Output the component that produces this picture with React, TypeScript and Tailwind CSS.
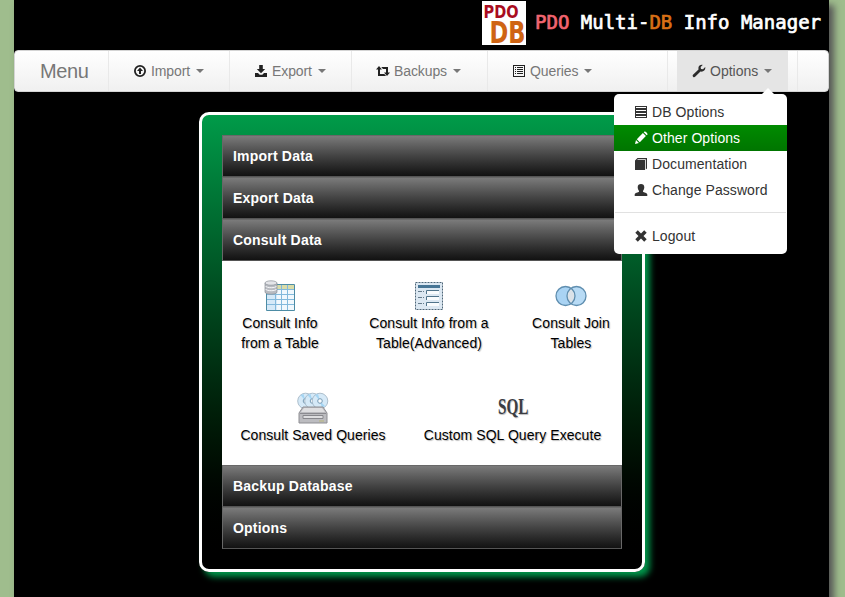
import React from "react";

type GlyphName = "upload" | "download" | "retweet" | "list" | "wrench" | "justify" | "pencil" | "book" | "user" | "remove";

function Glyph({ name, className = "" }: { name: GlyphName; className?: string }) {
  const shapes: Record<GlyphName, React.ReactNode> = {
    upload: (
      <>
        <circle cx="7" cy="7" r="5.1" fill="none" stroke="currentColor" strokeWidth="1.8" />
        <path d="M7 3.5L10 7H8v3H6V7H4z" />
      </>
    ),
    download: <path d="M5.2 1h3.6v4h2.4L7 9.2 2.8 5h2.4zM1 9h3l1.7 1.7h2.6L10 9h3v4H1z" />,
    retweet: <path d="M3 2l3 3.5H4V10h4.3l1.8 2H2V5.5H0zM5.2 3H12v5.5h2L11 12 8 8.5h2V5H7z" />,
    list: (
      <>
        <path fillRule="evenodd" d="M1 1h12v12H1zM2 2v10h10V2z" />
        <path d="M3 3h1v1H3zM5 3h6v1H5zM3 5h1v1H3zM5 5h6v1H5zM3 7h1v1H3zM5 7h6v1H5zM3 9h1v1H3zM5 9h6v1H5z" />
      </>
    ),
    wrench: <path d="M13.2 3.1L11 5.3 9 4.9 8.6 3l2.1-2.1C8.7.4 6.6 1.8 6.4 3.8L6.5 5.5 1 10.8c-1.2 1.3.8 3.3 2.1 2L8.5 7.5c2.8.8 5.4-1.7 4.7-4.4z" />,
    justify: <path fillRule="evenodd" d="M1 1h12v3H1zm1 1v1h10V2zM1 4h12v3H1zm1 1v1h10V5zM1 7h12v3H1zm1 1v1h10V8zM1 10h12v3H1zm1 1v1h10v-1z" />,
    pencil: <path d="M1 13l1-4 2.9 3zM2.8 8.2l6.1-6.1 3 3-6.1 6.1zM9.7 1.3l.8-.8c.8-.7 3.7 2.1 3 3l-.8.8z" />,
    book: <path d="M3.5 1H13v10.5l-1.2 1V2.2H4L3 3.1h8V13H1V3.5z" />,
    user: <path d="M3.7 4.2C3.7 2.1 5 1 7 1s3.3 1.1 3.3 3.2c0 1.6-.6 2.8-1.3 3.6v1c.7.8 4.3 1 4.3 2.8V13H.7v-1.4c0-1.8 3.6-2 4.3-2.8v-1c-.7-.8-1.3-2-1.3-3.6z" />,
    remove: <path d="M3.8 1.3L7 4.5l3.2-3.2 2.5 2.5L9.5 7l3.2 3.2-2.5 2.5L7 9.5l-3.2 3.2-2.5-2.5L4.5 7 1.3 3.8z" />,
  };
  return (
    <svg viewBox="0 0 14 14" className={`h-3.5 w-3.5 shrink-0 ${className}`} fill="currentColor">
      {shapes[name]}
    </svg>
  );
}

function Caret() {
  return <span className="ml-[6px] h-0 w-0 border-x-4 border-t-4 border-x-transparent border-t-[#777]" />;
}

function NavItem({ icon, label, className }: { icon: GlyphName; label: string; className: string }) {
  return (
    <div className={`flex h-full shrink-0 items-center border-r border-[#e9e9e9] text-[#777] ${className}`}>
      <Glyph name={icon} className="mr-1 text-[#222]" />
      <span className="tracking-[-0.1px]">{label}</span>
      <Caret />
    </div>
  );
}

function MenuRow({ icon, label, active = false }: { icon: GlyphName; label: string; active?: boolean }) {
  return (
    <div className={`flex h-[26px] items-center pl-5 ${active ? "bg-linear-to-b from-[#008b00] to-[#007500] text-white" : "text-[#333]"}`}>
      <Glyph name={icon} className="mr-1" />
      <span className="tracking-[0.08px]">{label}</span>
    </div>
  );
}

function Bar({ label }: { label: string }) {
  return (
    <div className="flex h-[42px] items-center border border-[#686868] border-b-[#555] bg-linear-to-b from-[#7b7b7b] to-[#121212] pl-[10px] text-[14px] font-bold tracking-[0.2px] text-white">
      {label}
    </div>
  );
}

function Logo() {
  return (
    <svg className="h-11 w-11 bg-white" viewBox="0 0 44 44" fontFamily="DejaVu Sans" fontWeight="bold">
      <text x="1.5" y="17" fontSize="18.5" textLength="35" lengthAdjust="spacingAndGlyphs" fill="#a90c20">PDO</text>
      <text x="7.5" y="41.5" fontSize="31" textLength="36" lengthAdjust="spacingAndGlyphs" fill="#cf6413">DB</text>
    </svg>
  );
}

function TableIcon() {
  return (
    <svg className="h-8 w-8" viewBox="0 0 32 32" fill="none">
      <path d="M2.5 4.5h28v26h-28z" fill="#f1f8fd" stroke="#4d8ca5" />
      <path d="M3 5h27v4H3z" fill="#d9dca9" />
      <path d="M3 9h10v21H3z" fill="#d5e9f8" />
      <path d="M3 9.5h27M3 14.5h27M3 19.5h27M3 24.5h27M11.5 5v25M17.5 5v25M23.5 5v25" stroke="#83b9dc" />
      <path d="M1 3v9c0 3 12 3 12 0V3z" fill="#b8bbc1" stroke="#8b9098" strokeWidth=".7" />
      <path d="M1.5 6c1 2.3 10.5 2.3 11 0M1.5 9c1 2.3 10.5 2.3 11 0" stroke="#f6f7f9" />
      <ellipse cx="7" cy="3" rx="6" ry="2.2" fill="#e4e5e9" stroke="#8b9098" strokeWidth=".7" />
    </svg>
  );
}

function FormIcon() {
  return (
    <svg className="h-8 w-8" viewBox="0 0 32 32" fill="none">
      <path d="M2.5 2.5h27v27h-27z" fill="#dce8f2" stroke="#4e6678" strokeDasharray="2 1" />
      <path d="M5 5h22v3H5z" fill="#477595" />
      <path d="M5 11.5h6M5 17.5h6M5 23.5h6" stroke="#657b8b" strokeDasharray="4 1" />
      <path d="M13 10h13v4H13zM13 16h13v4H13zM13 22h13v4H13z" fill="#f8fbfd" />
      <path d="M13.5 14v-3.5H26M13.5 20v-3.5H26M13.5 26v-3.5H26" stroke="#50748b" />
    </svg>
  );
}

function JoinIcon() {
  return (
    <svg className="h-8 w-8" viewBox="0 0 32 32">
      <circle cx="10.5" cy="16" r="9.5" fill="#a9d3f3" />
      <circle cx="21.5" cy="16" r="9.5" fill="#b8dbf5" />
      <path d="M16 8.2a9.5 9.5 0 0 1 0 15.6 9.5 9.5 0 0 1 0-15.6" fill="#dbe2e8" />
      <g fill="none" stroke="#5f8eaf" strokeWidth="1.3"><circle cx="10.5" cy="16" r="9.5" /><circle cx="21.5" cy="16" r="9.5" /></g>
    </svg>
  );
}

function DiscIcon() {
  return (
    <svg className="h-8 w-8" viewBox="0 0 32 32">
      {[8.5, 15.5, 23].map((x) => (
        <g key={x}>
          <circle cx={x} cy="9" r="7.8" fill="#d5e9f7" stroke="#9eb1c0" strokeWidth=".8" />
          <path d={`M${x} 9l-5-6 3-1zM${x} 9l5 5-3 2z`} fill="#a5d5f3" />
          <circle cx={x} cy="9" r="2.3" fill="#f8fcff" stroke="#779bb5" />
        </g>
      ))}
      <path d="M6 15h20l4 6v10H2V21z" fill="#bcbcc0" stroke="#8e8e93" />
      <path d="M7 16h18l3 4H4z" fill="#dfdfe1" />
      <path d="M3 21.5h26" stroke="#8b8b90" />
      <path d="M6 23.5h20v3H6z" fill="#dedee0" stroke="#88888d" />
      <path d="M22 29h5" stroke="#b8b77b" />
    </svg>
  );
}

function SqlIcon() {
  return (
    <svg className="h-8 w-8" viewBox="0 0 32 32">
      <text x="1" y="22" fontFamily="Liberation Serif" fontSize="23" fontWeight="bold" fill="#3b3d43" textLength="30.5" lengthAdjust="spacingAndGlyphs">SQL</text>
    </svg>
  );
}

function Tile({ icon, lines, className }: { icon: React.ReactNode; lines: string[]; className: string }) {
  return (
    <div className={`flex shrink-0 flex-col items-center text-[14px] leading-5 tracking-[0.06px] whitespace-nowrap text-black [text-shadow:1px_1px_1px_#bbb] ${className}`}>
      {icon}
      <div className="mt-[1px] text-center">{lines.map((line) => <div key={line}>{line}</div>)}</div>
    </div>
  );
}

export default function App() {
  return (
    <div className="h-[597px] w-[845px] overflow-hidden bg-[#9fbd8d] pl-[14px] font-['Liberation_Sans',Arial,sans-serif] text-[14px] leading-5">
      <div className="h-[650px] w-[815px] bg-black shadow-[5px_5px_7px_#555]">
        <header className="flex h-[50px] items-start pt-px pl-[468px]">
          <Logo />
          <h1 className="mt-2 ml-[9px] font-['DejaVu_Sans_Mono',monospace] text-[19px] leading-[27px] font-normal whitespace-pre text-white [-webkit-text-stroke:0.7px_currentColor]">
            <span className="text-[#f26570]">PDO</span> Multi-<span className="text-[#d97016]">DB</span> Info Manager
          </h1>
        </header>
        <nav className="relative flex h-[42px] items-stretch rounded-[4px] border border-[#d4d4d4] bg-linear-to-b from-white to-[#f0f0f0]">
          <div className="flex w-[94px] shrink-0 items-center border-r border-[#e9e9e9] pl-[25px] text-[20px] tracking-[-0.4px] text-[#777]">Menu</div>
          <NavItem icon="upload" label="Import" className="w-[121px] pl-[24px]" />
          <NavItem icon="download" label="Export" className="w-[122px] pl-[24px]" />
          <NavItem icon="retweet" label="Backups" className="w-[136px] pl-[24px]" />
          <NavItem icon="list" label="Queries" className="w-[180px] pl-[24px]" />
          <div className="ml-[9px] flex w-[111px] shrink-0 items-center bg-[#e5e5e5] pl-[15px] text-[#555]">
            <Glyph name="wrench" className="mr-1 text-[#2c2c2c]" />
            <span>Options</span>
            <Caret />
          </div>
          <div className="w-[10px] border-r border-[#e9e9e9]" />
          <div className="absolute top-[43px] left-[599px] z-10 h-[160px] w-[173px] rounded-[5px] bg-white pt-[5px]">
            <span className="absolute -top-[6px] right-[13px] h-0 w-0 border-x-[6px] border-b-[6px] border-x-transparent border-b-white" />
            <MenuRow icon="justify" label="DB Options" />
            <MenuRow icon="pencil" label="Other Options" active />
            <MenuRow icon="book" label="Documentation" />
            <MenuRow icon="user" label="Change Password" />
            <div className="mx-px mt-[9px] mb-[10px] h-px bg-[#e1e1e1]" />
            <MenuRow icon="remove" label="Logout" />
          </div>
        </nav>
        <main className="mt-5 ml-[185px] h-[460px] w-[446px] rounded-[10px] border-[3px] border-white bg-linear-to-b from-[#009b49] to-black px-5 pt-5 shadow-[5px_5px_6px_#00954a]">
          <Bar label="Import Data" />
          <Bar label="Export Data" />
          <Bar label="Consult Data" />
          <section className="h-[204px] bg-white pt-[19px]">
            <div className="flex h-28 pl-[8px]">
              <Tile icon={<TableIcon />} lines={["Consult Info", "from a Table"]} className="w-[100px]" />
              <Tile icon={<FormIcon />} lines={["Consult Info from a", "Table(Advanced)"]} className="ml-[29px] w-[140px]" />
              <Tile icon={<JoinIcon />} lines={["Consult Join", "Tables"]} className="ml-[22px] w-[100px]" />
            </div>
            <div className="flex pl-[11px]">
              <Tile icon={<DiscIcon />} lines={["Consult Saved Queries"]} className="w-[160px]" />
              <Tile icon={<SqlIcon />} lines={["Custom SQL Query Execute"]} className="ml-[26px] w-[187px]" />
            </div>
          </section>
          <Bar label="Backup Database" />
          <Bar label="Options" />
        </main>
      </div>
    </div>
  );
}
